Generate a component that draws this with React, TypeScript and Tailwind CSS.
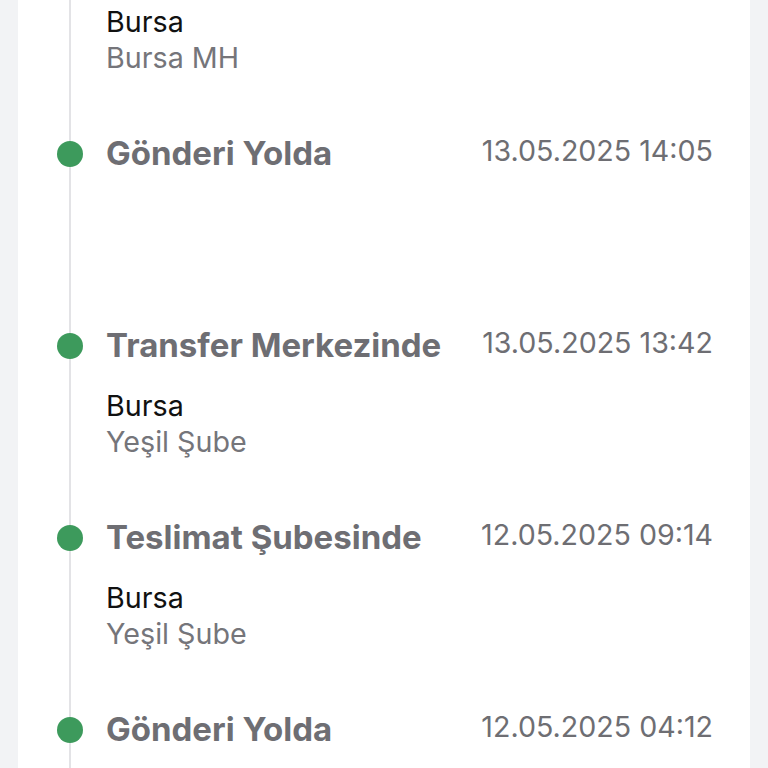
const events = [
  { title: "Gönderi Yolda", date: "13.05.2025 14:05", city: "", branch: "" },
  { title: "Transfer Merkezinde", date: "13.05.2025 13:42", city: "Bursa", branch: "Yeşil Şube" },
  { title: "Teslimat Şubesinde", date: "12.05.2025 09:14", city: "Bursa", branch: "Yeşil Şube" },
  { title: "Gönderi Yolda", date: "12.05.2025 04:12", city: "", branch: "" },
];

function Location({ city, branch }: { city: string; branch: string }) {
  return (
    <div className="text-[28.7px] leading-[36px]">
      <p className="h-[36px] text-[#111111]">{city}</p>
      <p className="h-[36px] text-[#75757a]">{branch}</p>
    </div>
  );
}

export default function App() {
  return (
    <div className="flex h-[768px] overflow-hidden bg-[#f2f3f5] px-[18px] font-['Inter','Noto_Sans',sans-serif]">
      <div className="flex-1 bg-white">
        <div className="ml-[51px] h-full border-l-2 border-[#e3e3e6]">
          <div className="pb-[59px] pl-[35px] pt-[4px]">
            <Location city="Bursa" branch="Bursa MH" />
          </div>
          {events.map((event, i) => (
            <div key={i} className="relative pb-[59px] pl-[35px] pr-[37px]">
              <span className="absolute left-[-14px] top-[6px] h-[26px] w-[26px] rounded-full bg-[#3d9a5c]" />
              <div className="flex h-[40px] items-center justify-between">
                <span className="mb-[2px] text-[33px] font-bold text-[#6e6e73]">{event.title}</span>
                <span className="mb-[7px] text-[28.6px] text-[#6e6e73]">{event.date}</span>
              </div>
              <div className="mt-[21px]">
                <Location city={event.city} branch={event.branch} />
              </div>
            </div>
          ))}
        </div>
      </div>
    </div>
  );
}
